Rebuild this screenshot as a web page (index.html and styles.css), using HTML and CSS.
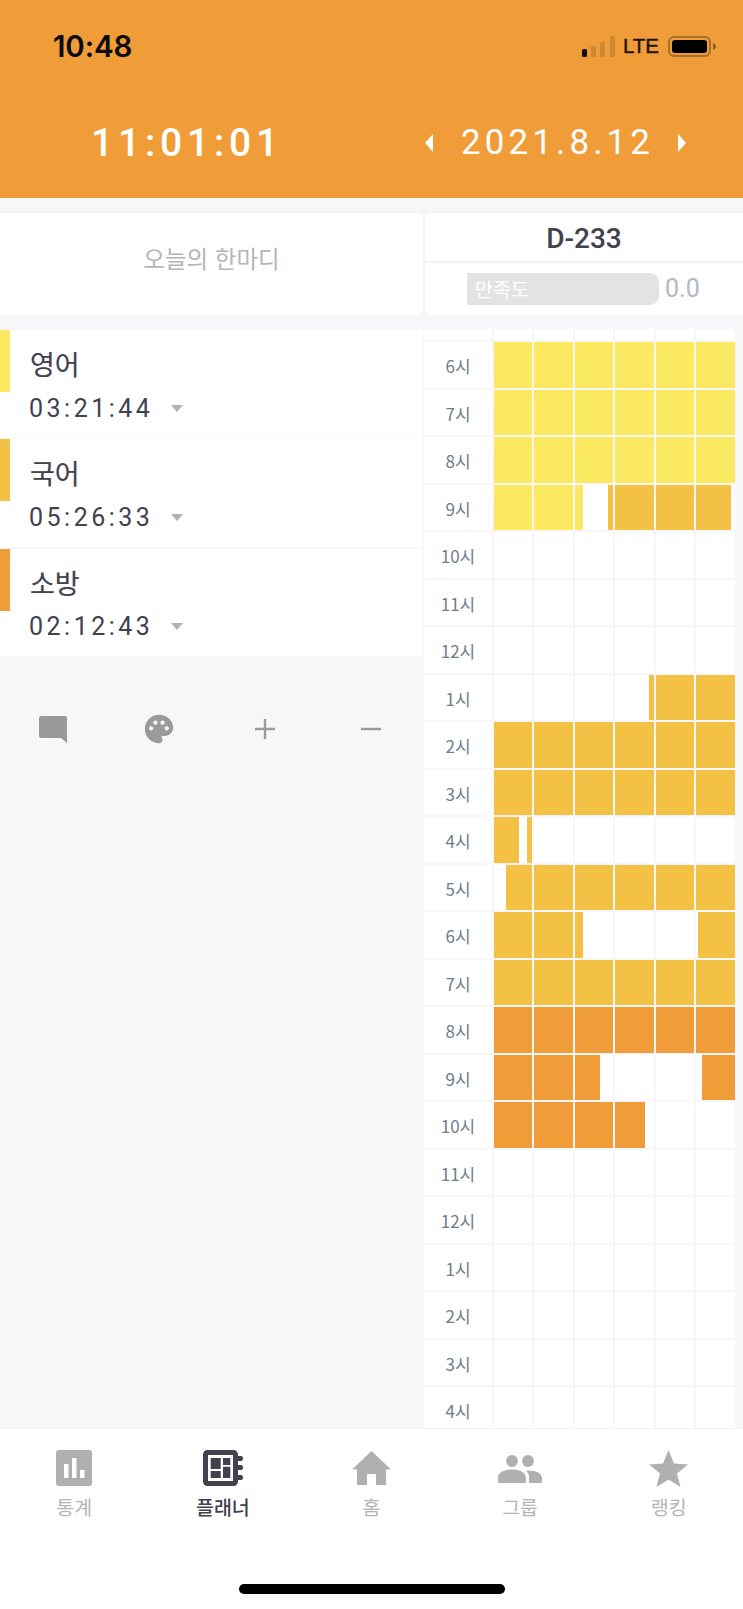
FILE: index.html
```html
<!DOCTYPE html>
<html lang="ko">
<head>
<meta charset="utf-8">
<title>플래너</title>
<link rel="stylesheet" href="styles.css">
</head>
<body>
<div class="app">
  <header class="header">
    <div class="status">
      <span class="clock">10:48</span>
      <div class="status-right">
        <svg class="signal" viewBox="0 0 33 21" width="33" height="21"><rect x="0" y="13" width="5" height="8" rx="1.5" fill="#111"/><rect x="9" y="10" width="5" height="11" rx="1" fill="#c98a30"/><rect x="18" y="6" width="5" height="15" rx="1" fill="#c98a30"/><rect x="28" y="0" width="5" height="21" rx="1" fill="#c98a30"/></svg>
        <span class="lte">LTE</span>
        <svg class="battery" viewBox="0 0 48 21" width="48" height="21"><rect x="1" y="1" width="41" height="19" rx="5" fill="none" stroke="#a8702a" stroke-width="2"/><rect x="4" y="4" width="35" height="13" rx="3" fill="#000"/><path d="M45 7c2 .7 3 2 3 3.500s-1 2.800-3 3.500z" fill="#8d6026"/></svg>
      </div>
    </div>
    <div class="header-main">
      <div class="timer">11:01:01</div>
      <div class="date">
        <svg class="tri" viewBox="0 0 8 18" width="8" height="18"><path d="M8 0v18L0 9z" fill="#fff"/></svg>
        <span class="date-text">2021.8.12</span>
        <svg class="tri" viewBox="0 0 8 18" width="8" height="18"><path d="M0 0v18l8-9z" fill="#fff"/></svg>
      </div>
    </div>
  </header>

  <section class="summary">
    <div class="motto">오늘의 한마디</div>
    <div class="goal">
      <div class="dday">D-233</div>
      <div class="rating">
        <div class="rating-bar">만족도</div>
        <span class="rating-value">0.0</span>
      </div>
    </div>
  </section>

  <main class="main">
    <div class="left">
      <ul class="subjects">
        <li class="subject">
          <span class="swatch yellow"></span>
          <div class="subject-body">
            <div class="subject-name">영어</div>
            <div class="subject-time"><span class="time-text">03:21:44</span><span class="caret"></span></div>
          </div>
        </li>
        <li class="subject">
          <span class="swatch amber"></span>
          <div class="subject-body">
            <div class="subject-name">국어</div>
            <div class="subject-time"><span class="time-text">05:26:33</span><span class="caret"></span></div>
          </div>
        </li>
        <li class="subject">
          <span class="swatch orange"></span>
          <div class="subject-body">
            <div class="subject-name">소방</div>
            <div class="subject-time"><span class="time-text">02:12:43</span><span class="caret"></span></div>
          </div>
        </li>
      </ul>
      <div class="tools">
        <div class="tool"><svg viewBox="0 0 28 27" width="28" height="27"><path d="M2 0h24a2 2 0 0 1 2 2v25l-6-5H2a2 2 0 0 1-2-2V2a2 2 0 0 1 2-2z" fill="#9a9a9c"/></svg></div>
        <div class="tool"><svg viewBox="0 0 24 24" width="34" height="34"><path fill="#9a9a9c" d="M12 2C6.490 2 2 6.490 2 12s4.490 10 10 10c1.380 0 2.500-1.120 2.500-2.500 0-.61-.23-1.200-.64-1.670-.08-.1-.13-.21-.13-.33 0-.28.22-.5.5-.5H16c3.310 0 6-2.690 6-6 0-4.960-4.490-9-10-9zm5.500 11c-.83 0-1.500-.67-1.500-1.500S16.670 10 17.500 10s1.500.67 1.500 1.500-.67 1.500-1.500 1.500zm-3-4c-.83 0-1.500-.67-1.500-1.500S13.670 6 14.500 6s1.500.67 1.500 1.500S15.330 9 14.500 9zM5 11.500c0-.83.67-1.500 1.500-1.500s1.500.67 1.500 1.500S7.330 13 6.500 13 5 12.330 5 11.500zm6-4c0 .83-.67 1.500-1.500 1.500S8 8.330 8 7.500 8.670 6 9.500 6s1.500.67 1.500 1.500z"/></svg></div>
        <div class="tool"><svg viewBox="0 0 20 20" width="20" height="20"><path d="M10 0v20M0 10h20" stroke="#9a9a9c" stroke-width="2.400" fill="none"/></svg></div>
        <div class="tool"><svg viewBox="0 0 20 20" width="20" height="20"><path d="M0 10h20" stroke="#9a9a9c" stroke-width="2.400" fill="none"/></svg></div>
      </div>
    </div>

    <div class="hours">
      <div class="head-row"><i></i><i></i><i></i><i></i><i></i><i></i><i></i></div>
      <div class="hour"><span class="hour-label">6시</span><i class="yellow"></i><i class="yellow"></i><i class="yellow"></i><i class="yellow"></i><i class="yellow"></i><i class="yellow"></i></div>
      <div class="hour"><span class="hour-label">7시</span><i class="yellow"></i><i class="yellow"></i><i class="yellow"></i><i class="yellow"></i><i class="yellow"></i><i class="yellow"></i></div>
      <div class="hour"><span class="hour-label">8시</span><i class="yellow"></i><i class="yellow"></i><i class="yellow"></i><i class="yellow"></i><i class="yellow"></i><i class="yellow"></i></div>
      <div class="hour"><span class="hour-label">9시</span><i class="yellow"></i><i class="yellow"></i><i><b class="yellow" style="width:22.5%"></b><b style="width:63%"></b><b class="amber" style="width:14.5%"></b></i><i class="amber"></i><i class="amber"></i><i><b class="amber" style="width:90%"></b></i></div>
      <div class="hour"><span class="hour-label">10시</span><i></i><i></i><i></i><i></i><i></i><i></i></div>
      <div class="hour"><span class="hour-label">11시</span><i></i><i></i><i></i><i></i><i></i><i></i></div>
      <div class="hour"><span class="hour-label">12시</span><i></i><i></i><i></i><i></i><i></i><i></i></div>
      <div class="hour"><span class="hour-label">1시</span><i></i><i></i><i></i><i><b style="width:87%"></b><b class="amber" style="width:13%"></b></i><i class="amber"></i><i class="amber"></i></div>
      <div class="hour"><span class="hour-label">2시</span><i class="amber"></i><i class="amber"></i><i class="amber"></i><i class="amber"></i><i class="amber"></i><i class="amber"></i></div>
      <div class="hour"><span class="hour-label">3시</span><i class="amber"></i><i class="amber"></i><i class="amber"></i><i class="amber"></i><i class="amber"></i><i class="amber"></i></div>
      <div class="hour"><span class="hour-label">4시</span><i><b class="amber" style="width:64%"></b><b style="width:21%"></b><b class="amber" style="width:15%"></b></i><i></i><i></i><i></i><i></i><i></i></div>
      <div class="hour"><span class="hour-label">5시</span><i><b style="width:31%"></b><b class="amber" style="width:69%"></b></i><i class="amber"></i><i class="amber"></i><i class="amber"></i><i class="amber"></i><i class="amber"></i></div>
      <div class="hour"><span class="hour-label">6시</span><i class="amber"></i><i class="amber"></i><i><b class="amber" style="width:22.5%"></b></i><i></i><i></i><i><b style="width:4.5%"></b><b class="amber" style="width:95.5%"></b></i></div>
      <div class="hour"><span class="hour-label">7시</span><i class="amber"></i><i class="amber"></i><i class="amber"></i><i class="amber"></i><i class="amber"></i><i class="amber"></i></div>
      <div class="hour"><span class="hour-label">8시</span><i class="orange"></i><i class="orange"></i><i class="orange"></i><i class="orange"></i><i class="orange"></i><i class="orange"></i></div>
      <div class="hour"><span class="hour-label">9시</span><i class="orange"></i><i class="orange"></i><i><b class="orange" style="width:65%"></b></i><i></i><i></i><i><b style="width:15%"></b><b class="orange" style="width:85%"></b></i></div>
      <div class="hour"><span class="hour-label">10시</span><i class="orange"></i><i class="orange"></i><i class="orange"></i><i><b class="orange" style="width:77%"></b></i><i></i><i></i></div>
      <div class="hour"><span class="hour-label">11시</span><i></i><i></i><i></i><i></i><i></i><i></i></div>
      <div class="hour"><span class="hour-label">12시</span><i></i><i></i><i></i><i></i><i></i><i></i></div>
      <div class="hour"><span class="hour-label">1시</span><i></i><i></i><i></i><i></i><i></i><i></i></div>
      <div class="hour"><span class="hour-label">2시</span><i></i><i></i><i></i><i></i><i></i><i></i></div>
      <div class="hour"><span class="hour-label">3시</span><i></i><i></i><i></i><i></i><i></i><i></i></div>
      <div class="hour"><span class="hour-label">4시</span><i></i><i></i><i></i><i></i><i></i><i></i></div>
    </div>
  </main>

  <nav class="tabbar">
    <div class="tabs">
      <div class="tab">
        <span class="tab-icon"><svg viewBox="0 0 36 36" width="36" height="36"><rect width="36" height="36" rx="3" fill="#b0b0b0"/><path d="M8 14h4.500v14H8zM16 8h4.500v20H16zM24 20h4.500v8H24z" fill="#fff"/></svg></span>
        <span class="tab-label">통계</span>
      </div>
      <div class="tab active">
        <span class="tab-icon"><svg viewBox="0 0 40 36" width="40" height="36"><path d="M34 6h4a2 2 0 0 1 2 2v1a2 2 0 0 1-2 2h-4zM34 15h4a2 2 0 0 1 2 2v1a2 2 0 0 1-2 2h-4zM34 25h4a2 2 0 0 1 2 2v1a2 2 0 0 1-2 2h-4z" fill="#41414f"/><rect x="2.500" y="2.500" width="30" height="31" rx="2" fill="#fff" stroke="#41414f" stroke-width="5"/><path d="M7.700 8h10v11h-10zM20 8h7.300v7H20zM7.700 21h10v7h-10zM20 16.700h7.300V28H20z" fill="#41414f"/></svg></span>
        <span class="tab-label">플래너</span>
      </div>
      <div class="tab">
        <span class="tab-icon"><svg viewBox="0 0 39 34" width="39" height="34"><path d="M19.500 0L39 18.500h-5V34H24V23h-9v11H5V18.500H0z" fill="#b0b0b0"/></svg></span>
        <span class="tab-label">홈</span>
      </div>
      <div class="tab">
        <span class="tab-icon"><svg viewBox="0 0 44 29" width="44" height="29"><circle cx="14" cy="7" r="6" fill="#b0b0b0"/><circle cx="30" cy="7" r="6" fill="#b0b0b0"/><path d="M0 29v-5c0-6 7-8.500 14-8.500s14 2.500 14 8.500v5zM31 29v-6c0-2.500-1-4.500-3-6.500 8 0 16 1.500 16 8v4.500z" fill="#b0b0b0"/></svg></span>
        <span class="tab-label">그룹</span>
      </div>
      <div class="tab">
        <span class="tab-icon"><svg viewBox="0 0 39 37" width="39" height="37"><path d="M19.500 0L25 13.500l14 1-11 9 3.500 13.500-12-7.500-12 7.500L11 23.500l-11-9 14-1z" fill="#b0b0b0"/></svg></span>
        <span class="tab-label">랭킹</span>
      </div>
    </div>
    <div class="home-indicator"></div>
  </nav>
</div>
</body>
</html>
```

FILE: styles.css
```css
* { box-sizing: border-box; }
html, body { margin: 0; padding: 0; }
body {
  font-family: "Noto Sans CJK KR", "Noto Sans", sans-serif;
  background: #f7f7fa;
  color: #41414f;
}
ul { list-style: none; margin: 0; padding: 0; }

.app {
  width: 743px;
  height: 1609px;
  display: flex;
  flex-direction: column;
  overflow: hidden;
}

/* Header */
.header {
  flex: 0 0 198px;
  background: #f09c38;
  color: #fff;
}
.status {
  height: 92px;
  padding: 26px 27px 0 53px;
  display: flex;
  justify-content: space-between;
  align-items: flex-start;
}
.clock {
  font-family: Inter, sans-serif;
  font-size: 29.500px;
  font-weight: 600;
  letter-spacing: -0.1px;
  line-height: 40px;
  color: #0b0b0b;
}
.status-right {
  display: flex;
  align-items: center;
  height: 40px;
}
.lte {
  font-family: "Liberation Sans", sans-serif;
  font-size: 20.500px;
  font-weight: 400;
  -webkit-text-stroke: 0.4px #1a1206;
  color: #1a1206;
  margin: 0 9px 0 8px;
}
.header-main {
  display: flex;
  align-items: center;
  height: 76px;
  padding-top: 26px;
}
.timer {
  width: 423px;
  padding-left: 91px;
  font-family: Roboto, sans-serif;
  font-size: 39px;
  font-weight: 500;
  letter-spacing: 4.800px;
  line-height: 56px;
}
.date {
  display: flex;
  align-items: center;
  padding-left: 2px;
}
.date-text {
  font-family: Roboto, sans-serif;
  font-size: 35px;
  letter-spacing: 4.100px;
  line-height: 50px;
  margin: 0 24px 0 28px;
}

/* Summary */
.summary {
  flex: 0 0 104px;
  margin-top: 13px;
  display: flex;
  background: #fff;
  border-top: 2px solid #f3f3f7;
}
.motto {
  width: 423px;
  display: flex;
  align-items: center;
  justify-content: center;
  font-size: 23.500px;
  color: #b5b5b8;
  padding-bottom: 12px;
}
.goal {
  flex: 1;
  border-left: 2px solid #f3f3f7;
}
.dday {
  height: 50px;
  padding-top: 2px;
  border-bottom: 2px solid #f3f3f7;
  display: flex;
  align-items: center;
  justify-content: center;
  font-family: Roboto, "Noto Sans CJK KR", sans-serif;
  font-size: 28px;
  font-weight: 500;
  color: #41414f;
}
.rating {
  display: flex;
  align-items: center;
  padding: 10px 0 0 42px;
}
.rating-bar {
  width: 192px;
  height: 32px;
  background: #e3e3e4;
  border-radius: 1px 9px 9px 1px;
  padding-left: 8px;
  font-size: 19.500px;
  line-height: 32px;
  color: #fff;
}
.rating-value {
  margin-left: 6px;
  font-family: Roboto, sans-serif;
  font-size: 25px;
  line-height: 32px;
  color: #b4b8bf;
}

/* Main */
.main {
  flex: 1;
  margin-top: 14px;
  display: flex;
  gap: 1px;
  overflow: hidden;
  min-height: 0;
}
.left { width: 423px; flex: none; }
.subjects {
  margin-top: 1px;
  display: flex;
  flex-direction: column;
  gap: 1.800px;
}
.subject {
  height: 107.500px;
  background: #fff;
  display: flex;
  align-items: flex-start;
}
.swatch { width: 10px; height: 62px; flex: none; }
.yellow { background: #fbe962; }
.amber { background: #f3c245; }
.orange { background: #f09c38; }
.subject-body { padding: 18px 0 0 20px; }
.subject-name {
  font-size: 27px;
  line-height: 32px;
  color: #41414f;
  -webkit-text-stroke: 0.2px #41414f;
}
.subject-time {
  margin-top: 12px;
  margin-left: -1px;
  display: flex;
  align-items: center;
  height: 32px;
}
.time-text {
  font-family: Roboto, sans-serif;
  font-size: 25px;
  letter-spacing: 3.500px;
  color: #41414f;
}
.caret {
  margin-left: 18px;
  width: 0;
  height: 0;
  border-left: 6px solid transparent;
  border-right: 6px solid transparent;
  border-top: 7px solid #b2b2b4;
}
.tools {
  margin-top: 56px;
  display: grid;
  grid-template-columns: repeat(4, 106px);
}
.tool {
  height: 34px;
  display: flex;
  align-items: center;
  justify-content: center;
}

/* Hour grid */
.hours {
  flex: none;
  width: 312px;
  display: flex;
  flex-direction: column;
  gap: 2px;
}
.head-row, .hour {
  display: grid;
  grid-template-columns: 68px repeat(6, 38.700px);
  column-gap: 1.800px;
  flex: none;
}
.head-row { height: 11px; }
.hour { height: 45.500px; }
.head-row i, .hour i {
  display: flex;
  background-color: #fff;
  overflow: hidden;
}
.hour i.yellow { background-color: #fbe962; }
.hour i.amber { background-color: #f3c245; }
.hour i.orange { background-color: #f09c38; }
.hour b { display: block; height: 100%; }
.hour-label {
  background: #fff;
  display: flex;
  align-items: center;
  justify-content: center;
  padding-top: 2px;
  font-size: 17px;
  color: #6f7d88;
}

/* Tab bar */
.tabbar {
  flex: 0 0 181px;
  background: #fff;
  border-top: 1px solid #f1f1f3;
  position: relative;
}
.tabs {
  display: grid;
  grid-template-columns: repeat(5, 1fr);
  padding-top: 20px;
}
.tab {
  display: flex;
  flex-direction: column;
  align-items: center;
  color: #b3b3b3;
}
.tab-icon {
  height: 38px;
  display: flex;
  align-items: center;
  justify-content: center;
}
.tab-label {
  margin-top: 7px;
  font-size: 19.500px;
  line-height: 26px;
}
.active { color: #41414f; }
.active .tab-label { font-weight: 500; }
.home-indicator {
  position: absolute;
  left: 239px;
  top: 155px;
  width: 266px;
  height: 10px;
  border-radius: 5px;
  background: #000;
}
```
